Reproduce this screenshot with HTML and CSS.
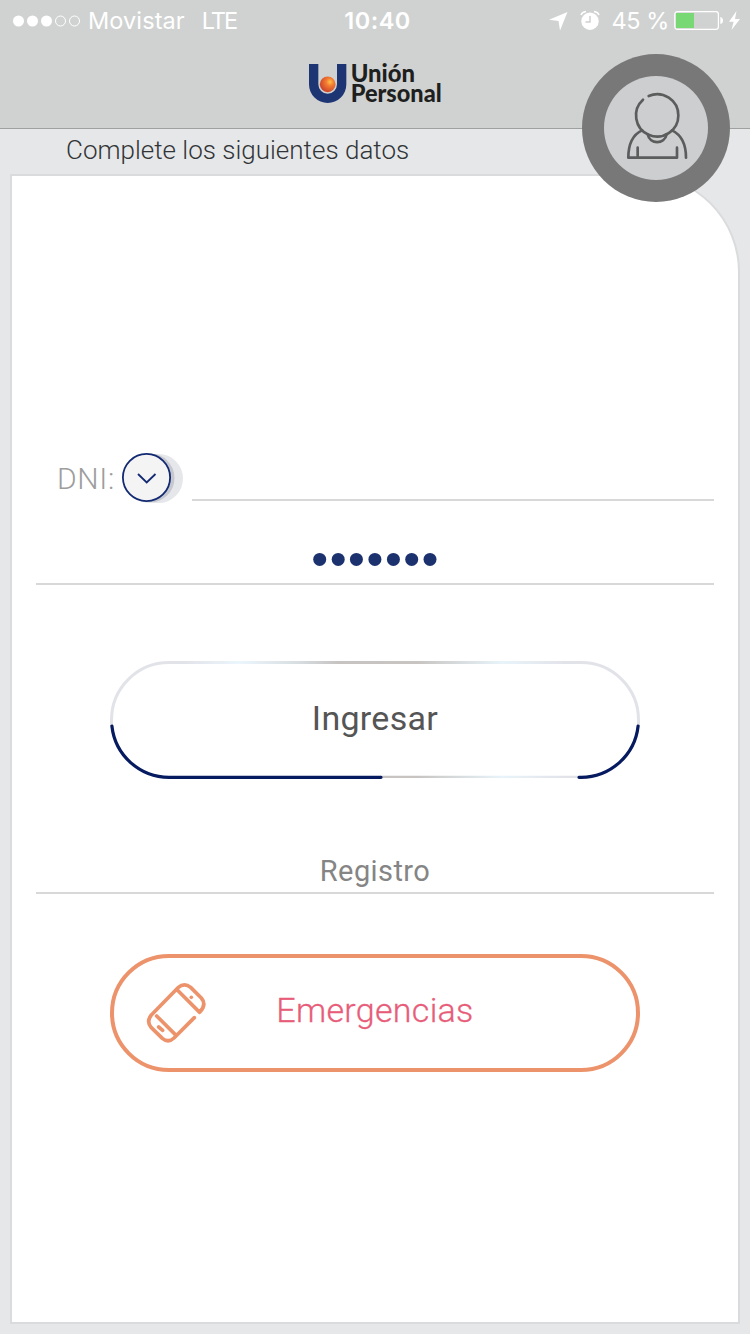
FILE: index.html
```
<!DOCTYPE html>
<html lang="es">
<head>
<meta charset="utf-8">
<title>Unión Personal</title>
<link rel="stylesheet" href="styles.css">
</head>
<body>
<div class="screen">
  <header class="header">
    <div class="status">
      <div class="status-left">
        <svg class="signal" viewBox="0 0 68 12"><g fill="#fff"><circle cx="6.500" cy="6" r="5.500"/><circle cx="20.500" cy="6" r="5.500"/><circle cx="34.500" cy="6" r="5.500"/></g><g fill="none" stroke="#fff"><circle cx="48.500" cy="6" r="5"/><circle cx="62.500" cy="6" r="5"/></g></svg>
        <span class="carrier">Movistar</span>
        <span class="network">LTE</span>
      </div>
      <span class="time">10:40</span>
      <div class="status-right">
        <svg class="status-icons" viewBox="0 0 55 22">
          <path d="M18.500 2L11 20.500 9.500 11 0 9.700z" fill="#fff"/>
          <circle cx="41" cy="11.200" r="8.700" fill="#fff"/>
          <path d="M32 5q1-3 5-3.500M50 5q-1-3-5-3.500" fill="none" stroke="#fff" stroke-width="1.500"/>
          <path d="M41 6v6h-4.500" fill="none" stroke="#d0d2d1" stroke-width="1.500"/>
        </svg>
        <span class="percent">45 %</span>
        <svg class="battery" viewBox="0 0 67 22">
          <rect x=".8" y="1.700" width="43.600" height="17.600" rx="2.500" fill="none" stroke="#fff" stroke-width="1.200"/>
          <rect x="2" y="3" width="18" height="15" fill="#77d874"/>
          <path d="M46.300 7q2.700.5 2.700 3.500t-2.700 3.500z" fill="#fff"/>
          <path d="M62.500 1L55 11.800h4.600L57.500 20 66 9h-5z" fill="#fff"/>
        </svg>
      </div>
    </div>
    <svg class="logo" viewBox="0 0 480 255">
      <defs><radialGradient id="ball" cx=".65" cy=".35" r=".7"><stop offset="0" stop-color="#ffc248"/><stop offset=".35" stop-color="#f47c32"/><stop offset="1" stop-color="#c9402a"/></radialGradient></defs>
      <path d="M42 42h28v61a28 28 0 0 0 56 0V42h28v61a56 56 0 0 1-112 0z" fill="#1d3573"/>
      <circle cx="98" cy="103" r="23.500" fill="url(#ball)"/>
      <g class="logo-text"><text x="167" y="96" textLength="193" lengthAdjust="spacingAndGlyphs">Unión</text><text x="167" y="156" textLength="273" lengthAdjust="spacingAndGlyphs">Personal</text></g>
    </svg>
    <svg class="avatar" viewBox="36 27 444 444">
      <circle cx="258" cy="249" r="222" fill="#787878"/><circle cx="258" cy="249" r="156" fill="#cdced0"/>
      <g fill="none" stroke="#5b5c5c" stroke-width="8" stroke-linecap="round" stroke-linejoin="round">
        <path d="M219 164a63.500 63.500 0 1 0 17-11"/>
        <path d="M216 256C186 270 175 302 175 338H321V308M203 338v-30M306 256c31 15 42 47 42 82M233 268c6 31 51 31 57 0"/>
      </g>
    </svg>
  </header>
  <p class="instructions">Complete los siguientes datos</p>
  <main class="card">
    <div class="document">
      <label class="doc-label">DNI:</label>
      <svg class="toggle" viewBox="0 0 63 50">
        <circle cx="37.500" cy="25.500" r="24.500" fill="#e5e7ea"/>
        <circle cx="29" cy="25" r="24.500" fill="#c5c8ce"/>
        <circle cx="25.500" cy="24.500" r="23.600" fill="#f5f4f4" stroke="#132a73" stroke-width="1.800"/>
        <path d="M17 21l8.700 8.500L34.500 21" fill="none" stroke="#132a73" stroke-width="1.800"/>
      </svg>
      <div class="doc-input"></div>
    </div>
    <div class="password">
      <svg class="dots" viewBox="0 0 124 14" fill="#1b326e"><circle cx="6.700" cy="7.400" r="6.500"/><circle cx="25.200" cy="7.400" r="6.500"/><circle cx="43.400" cy="7.400" r="6.500"/><circle cx="61.900" cy="7.400" r="6.500"/><circle cx="80.400" cy="7.400" r="6.500"/><circle cx="98.700" cy="7.400" r="6.500"/><circle cx="117" cy="7.400" r="6.500"/></svg>
    </div>
    <div class="button login">
      <svg class="outline" viewBox="0 0 530 118" fill="none">
        <defs><linearGradient id="sheen" gradientUnits="userSpaceOnUse" x1="0" y1="0" x2="530" y2="0"><stop offset=".14" stop-color="#e2e3e9"/><stop offset=".245" stop-color="#ebf6fc"/><stop offset=".35" stop-color="#d8dfe3"/><stop offset=".43" stop-color="#c7c3c2"/><stop offset=".58" stop-color="#c7c4c2"/><stop offset=".74" stop-color="#e8f4fa"/><stop offset=".86" stop-color="#e2e3e9"/></linearGradient></defs>
        <path d="M1.500 65V59A57.500 57.500 0 0 1 59 1.500H471A57.500 57.500 0 0 1 528.500 59v6" stroke="url(#sheen)" stroke-width="3"/>
        <path d="M270 115.800H471" stroke="url(#sheen)" stroke-width="2.300"/>
        <path d="M1.900 65A57.500 57.500 0 0 0 59 116.300H271M469 116.300h2A57.500 57.500 0 0 0 528.100 65" stroke="#061a60" stroke-width="3.200" stroke-linecap="round"/>
      </svg>
      <span class="login-text">Ingresar</span>
    </div>
    <div class="register"><span class="register-text">Registro</span></div>
    <div class="button emergency">
      <svg class="phone" viewBox="135 123 189 189" fill="none" stroke="#ed936c" stroke-width="11" stroke-linecap="round" stroke-linejoin="round">
        <path d="M283 233L222 294Q205 310 187 295L154 263Q138 245 154 225L234 143Q253 127 272 142L304 174Q321 194 299 217L232 150M170 228l59 59M176 261l12 10"/>
        <circle cx="274" cy="172" r="5.500" fill="#ed936c" stroke="none"/>
      </svg>
      <span class="emergency-text">Emergencias</span>
    </div>
  </main>
</div>
</body>
</html>
```
FILE: styles.css
```
* { box-sizing: border-box; }
body { margin: 0; }
.screen {
  width: 750px;
  height: 1334px;
  overflow: hidden;
  background: #e6e7e9;
  font-family: Roboto, "Liberation Sans", sans-serif;
  font-weight: 300;
}
svg { display: block; flex: none; }
span, label { white-space: nowrap; }
.header {
  position: relative;
  height: 129px;
  background: #d0d2d1;
  border-bottom: 1px solid #9fa1a1;
}
.status {
  height: 41px;
  display: grid;
  grid-template-columns: 1fr auto 1fr;
  align-items: center;
  padding: 0 9px 0 12px;
  color: #fff;
  font-family: Inter, "Liberation Sans", sans-serif;
  font-weight: 400;
  font-size: 23.5px;
  line-height: 41px;
}
.status-left, .status-right { display: flex; align-items: center; }
.status-right { justify-content: flex-end; }
.signal { width: 68px; height: 12px; }
.carrier { margin-left: 8px; letter-spacing: 0.1px; }
.network { margin-left: 17px; letter-spacing: -2px; }
.time { margin-left: 2px; font-weight: 600; letter-spacing: 0.5px; }
.status-icons { width: 55px; height: 22px; }
.percent { margin-left: 7px; letter-spacing: -0.4px; }
.battery { width: 67px; height: 22px; margin-left: 5px; }
.logo { width: 160px; height: 85px; margin: 9px auto 0; overflow: visible; }
.logo-text {
  font-family: Lato, "Open Sans", sans-serif;
  font-weight: 900;
  font-size: 72px;
  fill: #1e1f20;
}
.avatar { position: absolute; left: 582px; top: 54px; width: 148px; height: 148px; z-index: 2; }
.instructions {
  margin: 0;
  height: 45px;
  padding-left: 66px;
  color: #323537;
  font-size: 26px;
  line-height: 42px;
}
.card {
  width: 730px;
  height: 1150px;
  margin: 0 auto;
  padding: 277px 24px 0;
  background: #fff;
  border: 2px solid #dadbdc;
  border-top-right-radius: 98px;
}
.document { display: flex; height: 50px; padding-left: 21px; }
.doc-label { width: 64px; color: #9d9d9d; font-size: 30px; line-height: 52px; letter-spacing: 0.7px; }
.toggle { width: 63px; height: 50px; }
.doc-input { flex: 1; height: 48px; margin-left: 8px; border-bottom: 2px solid #d8d8d8; }
.password { height: 82px; padding-top: 49px; border-bottom: 2px solid #d8d8d8; }
.dots { width: 124px; height: 14px; margin: 0 auto; }
.button { width: 530px; height: 118px; margin: 0 auto; }
.login { display: grid; margin-top: 76px; }
.outline, .login-text { grid-area: 1 / 1; }
.outline { width: 530px; height: 118px; }
.login-text { justify-self: center; color: #555; font-size: 34px; line-height: 115px; letter-spacing: 0.3px; font-weight: 400; }
.register { height: 115px; padding-top: 72px; border-bottom: 2px solid #d8d8d8; text-align: center; }
.register-text { display: block; color: #858585; font-size: 29px; line-height: 40px; letter-spacing: 0.4px; font-weight: 400; }
.emergency {
  display: grid;
  grid-template-columns: 63px 1fr 63px;
  margin-top: 60px;
  padding: 0 31px;
  border: 4px solid #ed936c;
  border-radius: 59px;
}
.phone { width: 63px; height: 63px; margin-top: 23px; }
.emergency-text { justify-self: center; color: #e75d79; font-size: 34px; line-height: 105px; letter-spacing: 0.3px; font-weight: 300; -webkit-text-stroke: 0.3px #e75d79; }
```
